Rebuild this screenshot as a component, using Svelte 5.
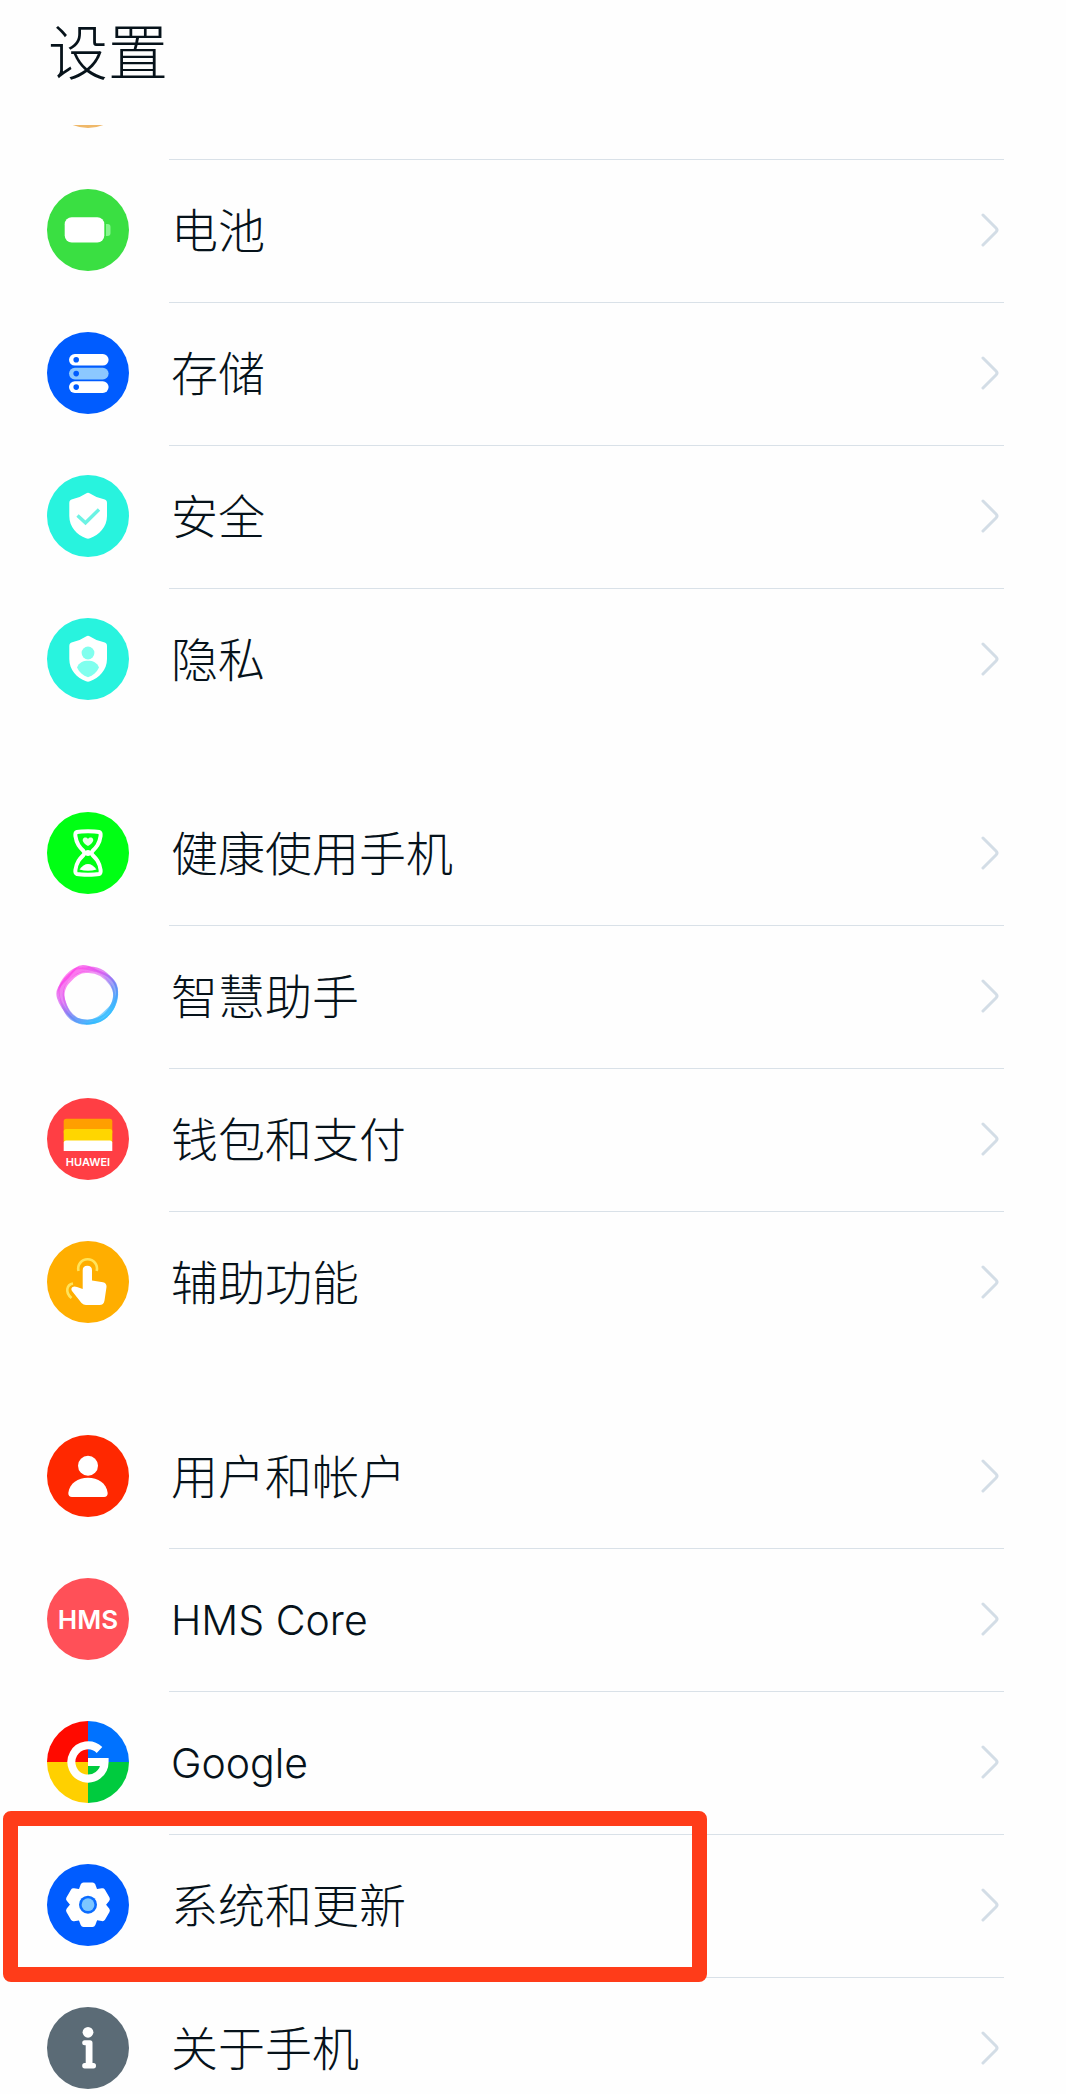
<script lang="ts">
  interface Item {
    id: string;
    name: string;
    color: string;
    latin?: boolean;
    marked?: boolean;
  }

  const groups: Item[][] = [
    [
      { id: 'battery', name: '电池', color: '#3adf42' },
      { id: 'storage', name: '存储', color: '#005cff' },
      { id: 'security', name: '安全', color: '#28f3de' },
      { id: 'privacy', name: '隐私', color: '#28f3de' },
    ],
    [
      { id: 'balance', name: '健康使用手机', color: '#00ff14' },
      { id: 'assistant', name: '智慧助手', color: 'none' },
      { id: 'wallet', name: '钱包和支付', color: '#ff3e44' },
      { id: 'accessibility', name: '辅助功能', color: '#ffae00' },
    ],
    [
      { id: 'users', name: '用户和帐户', color: '#ff2800' },
      { id: 'hms', name: 'HMS Core', color: '#ff5058', latin: true },
      { id: 'google', name: 'Google', color: 'none', latin: true },
      { id: 'system', name: '系统和更新', color: '#005cff', marked: true },
      { id: 'about', name: '关于手机', color: '#5b6b76' },
    ],
  ];

  const shield = 'M41 17.7 Q42 17.7 43 18.4 Q49 22.5 57 24.3 Q60 25 60 28 V41 C60 52 52 60 43 63.3 Q41 64 39 63.3 C30 60 22.3 52 22.3 41 V28 Q22.3 25 25.3 24.3 Q33 22.5 39 18.4 Q40 17.7 41 17.7 Z';
</script>

{#snippet icon(item: Item)}
  <svg class="icon" viewBox="0 0 82 82" aria-hidden="true">
    <circle cx="41" cy="41" r="41" fill={item.color} />
    {#if item.id === 'battery'}
      <rect x="17.7" y="28.3" width="39.6" height="25.2" rx="7" fill="#fff" />
      <path d="M59 35 h1.5 q3 0 3 3 v6 q0 3 -3 3 H59 z" fill="#86f58e" />
    {:else if item.id === 'storage'}
      <rect x="22" y="22" width="39.6" height="11.6" rx="5.8" fill="#fff" />
      <rect x="22" y="35.8" width="39.6" height="11.6" rx="5.8" fill="#8cc8ff" />
      <rect x="22" y="49.3" width="39.6" height="11.6" rx="5.8" fill="#fff" />
      <g fill="#005cff">
        <circle cx="29.2" cy="27.8" r="2.8" />
        <circle cx="29.2" cy="41.6" r="2.8" />
        <circle cx="29.2" cy="55.1" r="2.8" />
      </g>
    {:else if item.id === 'security'}
      <path d={shield} fill="#fff" />
      <path d="M30.5 40.5 L38.5 47.8 L52 34.5" fill="none" stroke="#6cf3e4" stroke-width="3.4" />
    {:else if item.id === 'privacy'}
      <path d={shield} fill="#fff" />
      <circle cx="41" cy="35" r="6.4" fill="#80ffee" />
      <path d="M30 49.5 C32 44.5 36 42.8 41 42.8 S50 44.5 52 49.5 C50 54 46 57.5 41 59.3 C36 57.5 32 54 30 49.5 Z" fill="#80ffee" />
    {:else if item.id === 'balance'}
      <path
        d="M41 19.3 C47 19.3 50 19.6 52 20 Q54 20.6 53.6 24 C52.5 32 49 35.5 45.5 39 Q43.8 41 45.5 43 C49 46.5 52.5 50 53.6 58 Q54 61.4 52 62 C50 62.4 47 62.7 41 62.7 S32 62.4 30 62 Q28 61.4 28.4 58 C29.5 50 33 46.5 36.5 43 Q38.2 41 36.5 39 C33 35.5 29.5 32 28.4 24 Q28 20.6 30 20 C32 19.6 35 19.3 41 19.3 Z"
        fill="none"
        stroke="#fff"
        stroke-width="4"
      />
      <path d="M41 34 C36 31 35.5 28.8 35.8 27.5 C36.5 25 39.5 25 41 27 C42.5 25 45.5 25 46.2 27.5 C46.5 28.8 46 31 41 34 Z" fill="#e8ffe9" />
      <path d="M32.5 57.5 C35 54 38 52 41 52 S47 54 49.5 57.5 Q41 60 32.5 57.5 Z" fill="#fff" />
      <circle cx="41" cy="41" r="3" fill="#fff" />
    {:else if item.id === 'assistant'}
      <defs>
        <linearGradient id="halo" x1="0.15" y1="0.1" x2="0.75" y2="0.9">
          <stop offset="0" stop-color="#ff3ce6" />
          <stop offset="0.35" stop-color="#d65cf2" />
          <stop offset="0.65" stop-color="#6a80f5" />
          <stop offset="1" stop-color="#28b8ff" />
        </linearGradient>
      </defs>
      <g fill="none" stroke="url(#halo)" stroke-width="2">
        <path d="M36 11 C43 11 48 15 55 18 C65 22 71 29 70 39 C69 51 63 61 53 66 C43 70 33 70 27 65 C20 59 14 53 11 43 C8 33 16 28 22 21 C27 15 30 11 36 11 Z" stroke-opacity="0.7" />
        <path d="M33 13 C42 14 50 15 58 19 C67 24 72 33 69 43 C66 55 55 63 46 67 C37 70 27 66 21 58 C16 51 10 43 12 34 C14 25 24 13 33 13 Z" stroke-opacity="0.6" />
        <path d="M40 14 C51 13 60 19 66 29 C72 40 67 53 58 61 C50 68 38 68 29 65 C20 61 17 52 15 43 C13 35 16 27 23 21 C28 17 34 14 40 14 Z" stroke-opacity="0.7" stroke-width="5" />
        <path d="M39 17 C50 16 58 22 63 29 C69 37 69 47 61 54 C55 60 50 65 41 66 C32 67 23 60 19 50 C15 42 16 33 22 27 C27 21 32 17 39 17 Z" stroke-opacity="0.6" />
      </g>
    {:else if item.id === 'wallet'}
      <rect x="16.7" y="20.7" width="48.6" height="16" rx="2.5" fill="#ff9f00" />
      <path d="M16.7 33.5 q0 -2.5 2.5 -2.5 h43.6 q2.5 0 2.5 2.5 V45 H16.7 z" fill="#ffd600" />
      <path d="M16.7 45 q0 -2.5 2.5 -2.5 h43.6 q2.5 0 2.5 2.5 V53 H16.7 z" fill="#fff" />
      <text class="brand" x="41" y="68" font-size="11">HUAWEI</text>
    {:else if item.id === 'accessibility'}
      <path
        d="M35.7 29.3 Q35.7 24.7 40.3 24.7 Q45 24.7 45 29.3 V39.5 L56 41.2 Q59.8 42 59.5 46 L57.5 59.5 Q56.8 64 52.5 64 H39 Q36.5 64 34.5 62 L25 50 Q23.5 47.5 25.5 46 Q27.5 44.8 30 46 L35.7 48 Z"
        fill="#fff"
      />
      <g fill="none" stroke="#ffe45c" stroke-width="2.6">
        <path d="M31.5 30 A9.4 9.4 0 1 1 49.7 30" />
        <path d="M26 42.5 C20 43.5 17.5 51 24.5 57" />
      </g>
    {:else if item.id === 'users'}
      <circle cx="41" cy="30.7" r="10" fill="#fff" />
      <path d="M21.3 58 C22.5 48 31 42.7 41 42.7 S59.5 48 60.7 58 Q60.7 62 57 62 H25 Q21.3 62 21.3 58 Z" fill="#fff" />
    {:else if item.id === 'hms'}
      <text class="brand" x="41" y="51" font-size="26">HMS</text>
    {:else if item.id === 'google'}
      <path d="M41 41 V0 A41 41 0 0 0 0 41 Z" fill="#ff0a00" />
      <path d="M41 41 H82 A41 41 0 0 0 41 0 Z" fill="#0072ff" />
      <path d="M41 41 H0 A41 41 0 0 0 41 82 Z" fill="#ffd000" />
      <path d="M41 41 V82 A41 41 0 0 0 82 41 Z" fill="#00cb3e" />
      <path d="M52.5 29 A16.6 16.6 0 1 0 57.6 41 H41" fill="none" stroke="#fff" stroke-width="8" />
    {:else if item.id === 'system'}
      <g fill="#fff">
        <circle cx="41" cy="40.7" r="17.4" />
        {#each [0, 60, 120] as angle}
          <path
            d="M36.5 18.5 H45.5 Q47.5 18.5 48.3 20.5 L50 25 V56.5 L48.3 61 Q47.5 63 45.5 63 H36.5 Q34.5 63 33.7 61 L32 56.5 V25 L33.7 20.5 Q34.5 18.5 36.5 18.5 Z"
            transform="rotate({angle} 41 40.7)"
          />
        {/each}
      </g>
      <circle cx="41" cy="40.7" r="9" fill="#0b6cff" />
      <circle cx="41" cy="40.7" r="6.4" fill="#7cc6ff" />
    {:else if item.id === 'about'}
      <circle cx="41" cy="25.3" r="5.4" fill="#fff" />
      <path d="M37.7 33.3 H43 Q45.5 33.3 45.5 35.8 V56 H46.5 Q49 56 49 58.7 T46.5 61.4 H37.7 Q35.2 61.4 35.2 58.7 T37.7 56 H38.7 V38.3 H37.7 Q35.2 38.3 35.2 35.8 T37.7 33.3 Z" fill="#fff" />
    {/if}
  </svg>
{/snippet}

<div class="screen">
  <header>
    <h1>设置</h1>
  </header>

  <main>
    <!-- row scrolled under the header -->
    <div class="row is-scrolled">
      {@render icon({ id: 'scrolled', name: '', color: '#efb869' })}
      <span class="body"></span>
    </div>

    {#each groups as items}
      <ul>
        {#each items as item}
          <li>
            <a class="row" class:is-marked={item.marked} href="#{item.id}">
              {@render icon(item)}
              <span class="body">
                <span class="label" class:latin={item.latin}>{item.name}</span>
                <svg class="chevron" viewBox="0 0 18 34" aria-hidden="true">
                  <path d="M2 2 L15 15 Q17 17 15 19 L2 32" />
                </svg>
              </span>
            </a>
          </li>
        {/each}
      </ul>
    {/each}
  </main>
</div>

<style>
  :global(body) {
    background: #fefefe;
  }

  .screen {
    display: flex;
    flex-direction: column;
    height: 100vh;
    overflow: hidden;
    color: #06121a;
    font-family: "Noto Sans CJK SC", sans-serif;
    font-weight: 300;
  }

  header {
    flex: none;
    padding: 9px 48px 37px;
  }

  h1 {
    margin: 0;
    font-size: 60px;
    font-weight: 300;
    line-height: 79px;
  }

  main {
    flex: 1;
    min-height: 0;
    overflow: hidden;
  }

  ul {
    margin: 0 0 51px;
    padding: 0;
    list-style: none;
  }

  .row {
    position: relative;
    display: flex;
    align-items: center;
    gap: 40px;
    box-sizing: border-box;
    height: 143px;
    padding: 0 62px 0 47px;
    color: inherit;
    text-decoration: none;
  }

  .row.is-scrolled {
    align-items: flex-end;
    height: 35px;
    overflow: hidden;
  }

  .is-scrolled .icon {
    margin-bottom: 32px;
  }

  .icon {
    flex: none;
    width: 82px;
    height: 82px;
    margin-bottom: 3px;
  }

  .brand {
    fill: #fff;
    font-family: Inter, sans-serif;
    font-weight: 600;
    text-anchor: middle;
  }

  .body {
    flex: 1;
    display: flex;
    align-items: center;
    justify-content: space-between;
    box-sizing: border-box;
    height: 100%;
    padding: 0 5px 0 2px;
    border-bottom: 1px solid #d9e1e8;
  }

  li:last-child .body {
    border-bottom-color: transparent;
  }

  .label {
    padding-bottom: 6px;
    font-size: 47px;
    line-height: 60px;
  }

  .label.latin {
    padding-bottom: 0;
    font-family: Inter, sans-serif;
    font-size: 41px;
  }

  .chevron {
    width: 18px;
    height: 34px;
    margin-bottom: 2px;
    fill: none;
    stroke: #d3dde6;
    stroke-width: 3;
    stroke-linecap: round;
  }

  .is-marked::after {
    content: "";
    position: absolute;
    z-index: 1;
    top: -24px;
    bottom: -4px;
    left: 3px;
    box-sizing: border-box;
    width: 66%;
    border: 15px solid #ff3c19;
    border-radius: 8px;
    pointer-events: none;
  }
</style>
